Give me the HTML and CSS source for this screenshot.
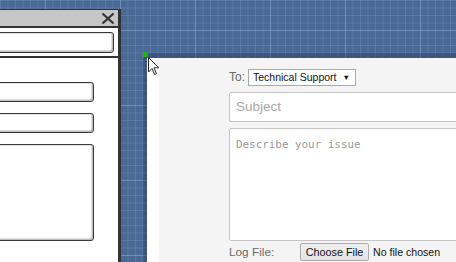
FILE: index.html
```html
<!DOCTYPE html>
<html>
<head>
<meta charset="utf-8">
<link rel="stylesheet" href="styles.css">
</head>
<body>
<div class="canvas">
  <div class="wire-window">
    <div class="wire-title">
      <svg class="wire-close" width="14" height="13" viewBox="0 0 14 13"><path d="M1.5 1.5 L12.5 11.5 M12.5 1.5 L1.5 11.5" stroke="#333" stroke-width="2.2" fill="none"/></svg>
    </div>
    <div class="wire-head">
      <div class="wire-input wire-search"></div>
    </div>
    <div class="wire-body">
      <div class="wire-input"></div>
      <div class="wire-input"></div>
      <div class="wire-input wire-area"></div>
    </div>
  </div>

  <div class="sel-top"></div>
  <div class="sel-left"></div>
  <div class="handle"></div>

  <div class="form-window">
    <div class="form-frame"></div>
    <div class="form-content">
      <div class="row-to">
        <span class="label">To:</span>
        <span class="select">Technical Support <span class="caret">&#9660;</span></span>
      </div>
      <div class="field subject">Subject</div>
      <div class="field issue">Describe your issue</div>
      <div class="row-file">
        <span class="label file-label">Log File:</span>
        <span class="file-btn">Choose File</span>
        <span class="file-none">No file chosen</span>
      </div>
    </div>
  </div>

  <svg class="cursor" width="12" height="19" viewBox="0 0 12 19"><path d="M0.5 0.5 L0.5 15 L4 11.5 L6.5 17.5 L8.5 16.7 L6 10.8 L10.8 10.8 Z" fill="#fff" stroke="#222" stroke-width="1"/></svg>
</div>
</body>
</html>
```
FILE: styles.css
```css
html, body {
  margin: 0;
  padding: 0;
}
body {
  width: 456px;
  height: 262px;
  overflow: hidden;
  font-family: "Liberation Sans", Arial, sans-serif;
}
.canvas {
  position: relative;
  width: 456px;
  height: 262px;
  background-color: #4a6a95;
  background-image:
    linear-gradient(to right, rgba(140,170,210,0.4) 1px, transparent 1px),
    linear-gradient(to bottom, rgba(140,170,210,0.4) 1px, transparent 1px),
    linear-gradient(to right, rgba(120,150,195,0.35) 1px, transparent 1px),
    linear-gradient(to bottom, rgba(120,150,195,0.35) 1px, transparent 1px);
  background-size: 75px 75px, 75px 75px, 7.5px 7.5px, 7.5px 7.5px;
  background-position: 45px 30px, 45px 30px, 0 0, 0 0;
  overflow: hidden;
}

/* left wireframe window */
.wire-window {
  position: absolute;
  left: -60px;
  top: 9px;
  width: 177px;
  height: 300px;
  background: #fff;
  border: 1.5px solid #333;
  border-right-width: 3px;
  display: flex;
  flex-direction: column;
}
.wire-title {
  height: 16px;
  background: #c6c6c6;
  border-bottom: 2px solid #333;
  display: flex;
  justify-content: flex-end;
  align-items: center;
  padding-right: 3px;
}
.wire-close {
  display: block;
}
.wire-head {
  padding: 4px 4px 3px 0;
  border-bottom: 2px solid #333;
}
.wire-input {
  height: 18px;
  background: #fff;
  border: 1.5px solid #3a3a3a;
  border-radius: 3px;
  box-shadow: inset -1.5px -1.5px 0 #bdbdbd, inset 1px 1px 0 #e2e2e2;
}
.wire-search {
  height: 19px;
}
.wire-body {
  padding: 23.5px 24px 0 0;
  display: flex;
  flex-direction: column;
  gap: 11px;
}
.wire-area {
  height: 95px;
}

/* selection */
.sel-top {
  position: absolute;
  left: 143px;
  top: 53px;
  width: 320px;
  height: 5px;
  background: rgba(30,50,80,0.35);
}
.sel-left {
  position: absolute;
  left: 143px;
  top: 58px;
  width: 4px;
  height: 210px;
  background: rgba(30,50,80,0.35);
}
.handle {
  position: absolute;
  left: 143px;
  top: 52px;
  width: 5px;
  height: 5px;
  background: #1fb312;
}

/* form window */
.form-window {
  position: absolute;
  left: 147px;
  top: 58px;
  width: 320px;
  height: 210px;
  display: flex;
  background: #fff;
}
.form-frame {
  width: 12px;
  background: #fff;
}
.form-content {
  flex: 1;
  background: #f4f4f4;
  padding: 10px 0 0 70px;
  display: flex;
  flex-direction: column;
}
.label {
  color: #6b6b6b;
  font-size: 12px;
}
.row-to {
  display: flex;
  align-items: center;
  gap: 3px;
  height: 18px;
}
.select {
  display: inline-flex;
  align-items: center;
  height: 15px;
  padding: 0 5px 0 4px;
  border: 1px solid #a9a9a9;
  background: #fff;
  font-size: 10.5px;
  color: #111;
  width: 97px;
  justify-content: space-between;
}
.caret {
  font-size: 7.5px;
}
.field {
  background: #fff;
  border: 1px solid #c4c4c4;
  border-radius: 2px;
  color: #a8a8a8;
  box-sizing: border-box;
}
.subject {
  margin-top: 6px;
  height: 30px;
  padding: 6px 0 0 6px;
  font-size: 13.5px;
}
.issue {
  margin-top: 6px;
  height: 113px;
  padding: 9px 0 0 6px;
  font-family: "DejaVu Sans Mono", monospace;
  font-size: 10.9px;
  color: #9a9a9a;
}
.row-file {
  display: flex;
  align-items: center;
  height: 20px;
  margin-top: 1px;
}
.file-label {
  width: 71px;
  font-size: 11.8px;
}
.file-btn {
  box-sizing: border-box;
  height: 18px;
  width: 69px;
  display: inline-flex;
  align-items: center;
  justify-content: center;
  border: 1px solid #acacac;
  border-radius: 2px;
  background: linear-gradient(#f0f0f0, #e3e3e3);
  font-size: 10.8px;
  color: #111;
}
.file-none {
  margin-left: 4px;
  font-size: 10.6px;
  color: #111;
}

.cursor {
  position: absolute;
  left: 148px;
  top: 57px;
}
```
